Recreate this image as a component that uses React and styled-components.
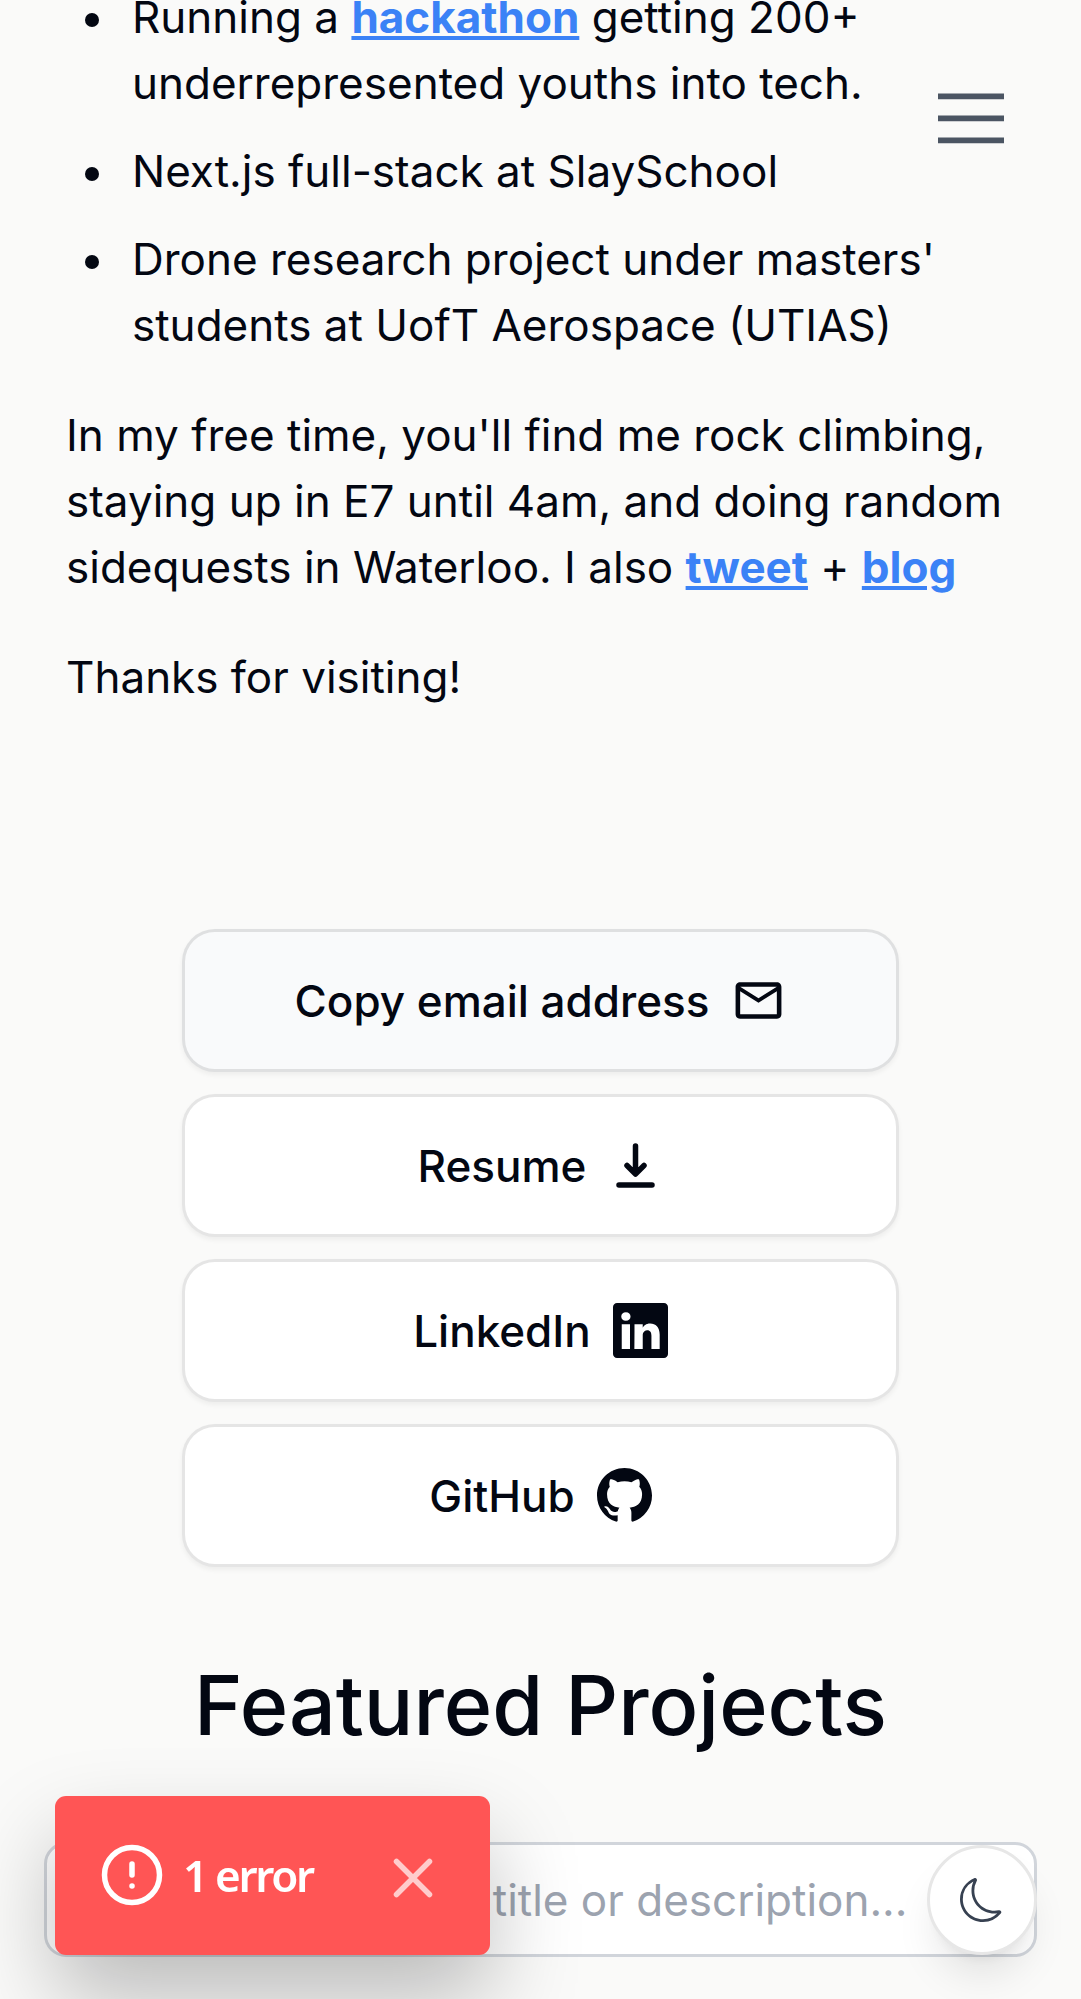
import React from "react";
import styled, { createGlobalStyle } from "styled-components";
import { BsLinkedin, BsGithub, BsMoon } from "react-icons/bs";
import { MdOutlineEmail } from "react-icons/md";

const Global = createGlobalStyle`
  * { box-sizing: border-box; }
  html, body { margin: 0; height: 1999px; overflow: hidden; }
  body {
    background: #fafaf9;
    color: #030712;
    font: 400 44px/66px Inter, "Liberation Sans", sans-serif;
  }
`;

const Page = styled.main`
  display: flex;
  flex-direction: column;
  height: 1999px;
  margin-top: -16px;
  padding: 0 44px;
`;
const About = styled.section`
  padding: 0 22px;
`;
const List = styled.ul`
  margin: 0;
  padding: 0 0 0 66px;
  display: flex;
  flex-direction: column;
  gap: 22px;
  list-style: none;
`;
const Item = styled.li`
  position: relative;
  &::before {
    content: "";
    position: absolute;
    left: -47px;
    top: 29px;
    width: 14px;
    height: 14px;
    border-radius: 50%;
    background: currentColor;
  }
`;
const Text = styled.p`
  margin: 44px 0 0;
`;
const TextLink = styled.a`
  color: #3b82f6;
  font-weight: 700;
  text-decoration: underline;
`;
const Actions = styled.nav`
  display: flex;
  flex-direction: column;
  align-items: center;
  gap: 22px;
  margin-top: 219px;
`;
const Action = styled.a`
  display: flex;
  align-items: center;
  justify-content: center;
  gap: 22px;
  width: 717px;
  height: 143px;
  border: 3px solid rgba(0, 0, 0, 0.1);
  border-radius: 33px;
  background: ${(p) => (p.$tinted ? "#f9fafb" : "#fff")};
  box-shadow: 0 3px 5.5px rgba(0, 0, 0, 0.05);
  font-weight: 500;
`;
const Heading = styled.h2`
  margin: 89px 0 0;
  font-size: 82.5px;
  line-height: 99px;
  font-weight: 500;
  text-align: center;
`;
const Search = styled.input`
  flex: none;
  margin-top: 87px;
  width: 993px;
  height: 115px;
  padding: 0 44px;
  border: 3px solid #d1d5db;
  border-radius: 22px;
  background: #fff;
  font: inherit;
  &::placeholder { color: #9ca3af; opacity: 1; }
`;
const MenuButton = styled.button`
  position: fixed;
  top: 85px;
  right: 77px;
  width: 66px;
  height: 66px;
  padding: 0;
  border: 0;
  background: none;
  color: #4b5563;
  svg { display: block; }
`;
const ThemeButton = styled.button`
  position: fixed;
  right: 44px;
  bottom: 44px;
  display: grid;
  place-items: center;
  width: 110px;
  height: 110px;
  padding: 0;
  border: 3px solid #e7e7e7;
  border-radius: 50%;
  background: #fff;
  color: #374151;
  box-shadow: 0 27px 41px -8px rgba(0, 0, 0, 0.1), 0 11px 16px -11px rgba(0, 0, 0, 0.1);
`;
const Toast = styled.aside`
  position: fixed;
  left: 55px;
  bottom: 44px;
  display: flex;
  align-items: center;
  width: 434.6px;
  height: 159.4px;
  padding: 0 44px;
  border-radius: 11px;
  background: #ff5555;
  color: #fff;
  box-shadow: 0 44px 88px rgba(0, 0, 0, 0.25);
  font-family: "Noto Sans", sans-serif;
  font-weight: 600;
`;
const ToastLabel = styled.span`
  margin-left: 18px;
  letter-spacing: -2.3px;
`;
const Close = styled.svg`
  margin: 5px 0 0 auto;
  opacity: 0.7;
`;

const DownloadIcon = () => (
  <svg width="55" height="55" viewBox="0 0 55 55" fill="none" stroke="currentColor" strokeWidth="5.5" strokeLinecap="round" strokeLinejoin="round">
    <path d="M27.5 8v27M19 27.500l8.500 8.500L36 27.500M11 47h33" />
  </svg>
);

export default function App() {
  return (
    <>
      <Global />
      <Page>
        <About>
          <List>
            <Item>Running a <TextLink>hackathon</TextLink> getting 200+ underrepresented youths into tech.</Item>
            <Item>Next.js full-stack at SlaySchool</Item>
            <Item>Drone research project under masters' students at UofT Aerospace (UTIAS)</Item>
          </List>
          <Text>
            In my free time, you'll find me rock climbing, staying up in E7 until 4am, and doing random
            sidequests in Waterloo. I also <TextLink>tweet</TextLink> + <TextLink>blog</TextLink>
          </Text>
          <Text>Thanks for visiting!</Text>
        </About>
        <Actions>
          <Action $tinted>Copy email address <MdOutlineEmail size={55} /></Action>
          <Action>Resume <DownloadIcon /></Action>
          <Action>LinkedIn <BsLinkedin size={55} /></Action>
          <Action>GitHub <BsGithub size={55} /></Action>
        </Actions>
        <Heading>Featured Projects</Heading>
        <Search placeholder="Search projects by title or description..." />
      </Page>
      <MenuButton aria-label="Menu">
        <svg width="66" height="66" viewBox="0 0 66 66" fill="currentColor">
          <path d="M0 8.400h66v5.800H0zM0 30.400h66v5.800H0zM0 52.400h66v5.800H0z" />
        </svg>
      </MenuButton>
      <ThemeButton aria-label="Dark mode"><BsMoon size={44} /></ThemeButton>
      <Toast>
        <svg width="66" height="66" viewBox="0 0 24 24" fill="none" stroke="currentColor" strokeWidth="2" strokeLinecap="round" strokeLinejoin="round">
          <circle cx="12" cy="12" r="10" />
          <path d="M12 8v4M12 16h.01" />
        </svg>
        <ToastLabel>1 error</ToastLabel>
        <Close width="66" height="66" viewBox="0 0 24 24" fill="none" stroke="currentColor" strokeWidth="2" strokeLinecap="round">
          <path d="M18 6L6 18M6 6l12 12" />
        </Close>
      </Toast>
    </>
  );
}
